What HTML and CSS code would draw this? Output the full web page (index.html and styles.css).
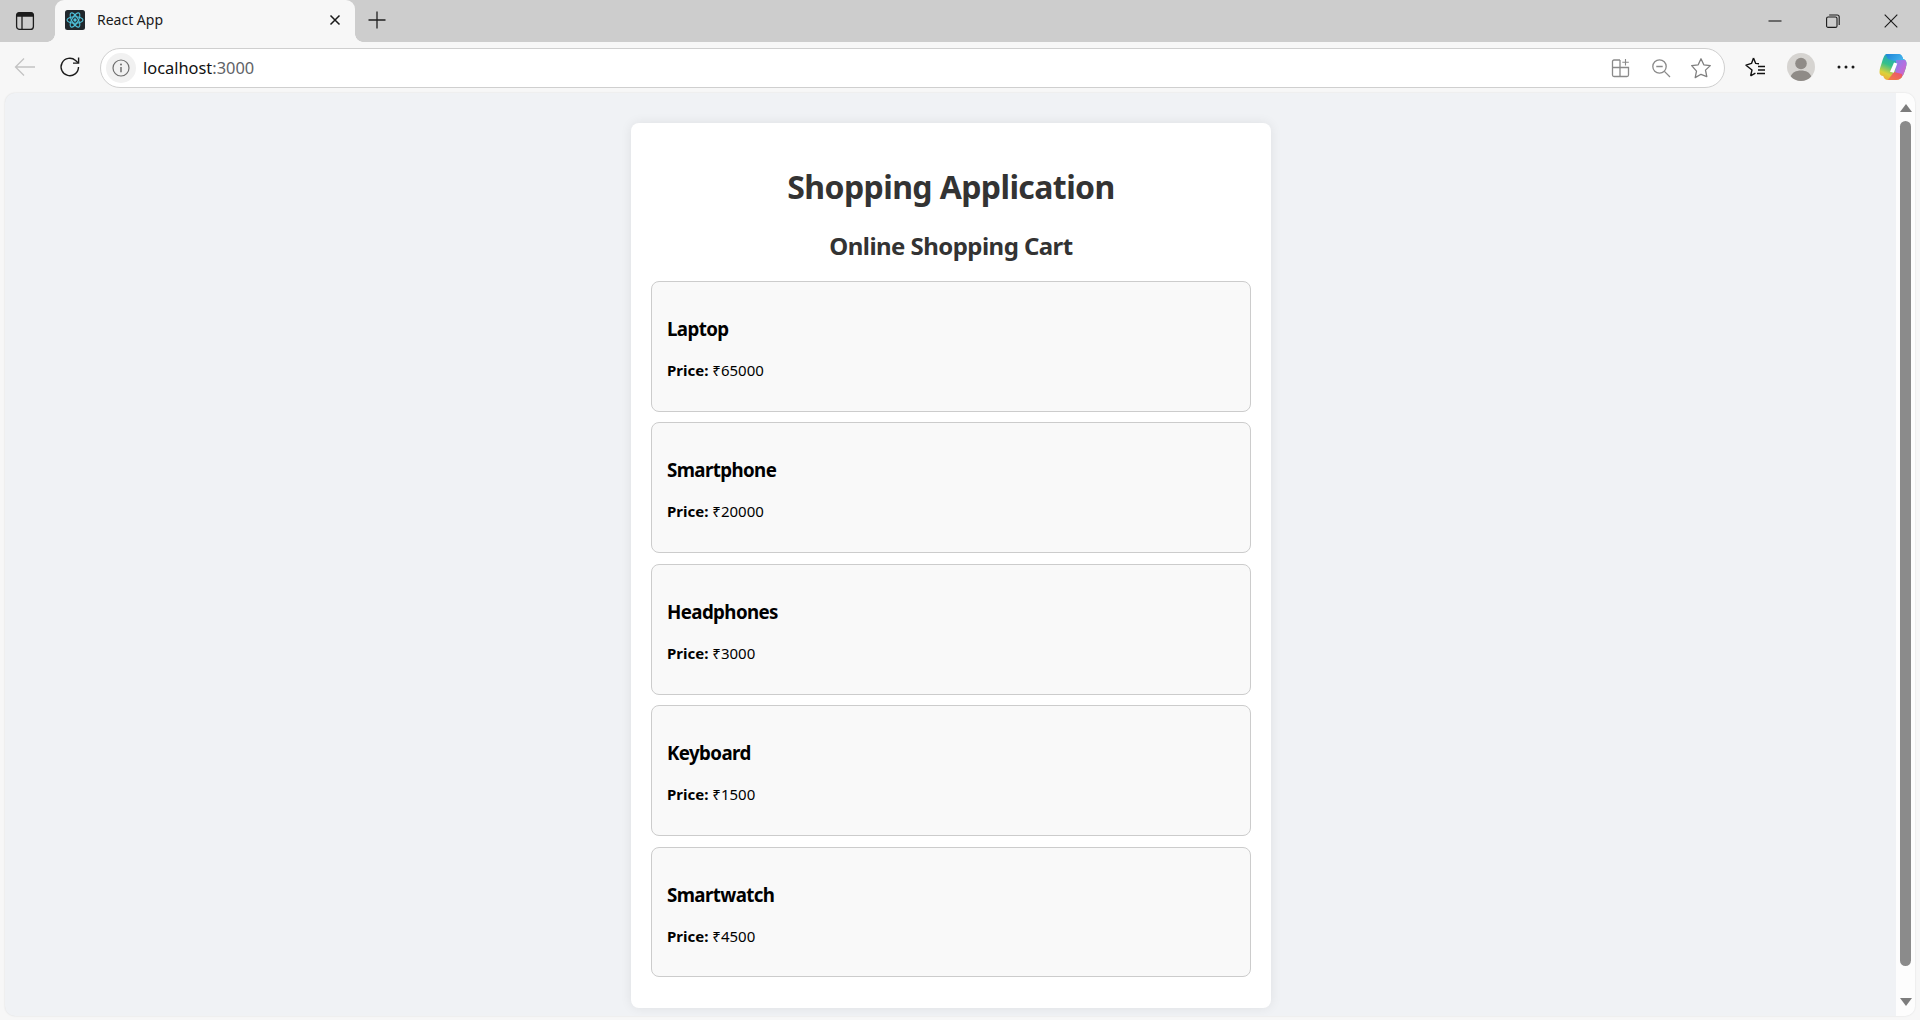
FILE: index.html
```html
<!DOCTYPE html>
<html lang="en">
<head>
<meta charset="utf-8">
<title>React App</title>
<link rel="stylesheet" href="styles.css">
</head>
<body>
<div class="browser">
  <header class="tabstrip">
    <div class="strip-btn sidebar-btn">
      <svg width="20" height="20" viewBox="0 0 20 20" fill="none" stroke="#1c1c1c" stroke-width="1.3"><rect x="1.6" y="1.6" width="16.8" height="16.8" rx="3"/><path d="M2 3.5C2 2.5 3 2 4 2h12c1 0 2 .5 2 1.5V5H2z" fill="#1c1c1c"/><path d="M7 5v13"/></svg>
    </div>
    <div class="tab">
      <svg class="favicon" width="20" height="20" viewBox="0 0 20 20"><rect width="20" height="20" rx="2.5" fill="#20272c"/><g fill="none" stroke="#4fc3dc" stroke-width="1.1"><ellipse cx="10" cy="10" rx="8" ry="3.2"/><ellipse cx="10" cy="10" rx="8" ry="3.2" transform="rotate(60 10 10)"/><ellipse cx="10" cy="10" rx="8" ry="3.2" transform="rotate(120 10 10)"/></g><circle cx="10" cy="10" r="1.7" fill="#4fc3dc"/></svg>
      <span class="tab-title">React App</span>
      <svg class="tab-close" width="12" height="12" viewBox="0 0 12 12" stroke="#1a1a1a" stroke-width="1.5"><path d="M1.5 1.5l9 9M10.5 1.5l-9 9"/></svg>
    </div>
    <div class="strip-btn new-tab">
      <svg width="18" height="18" viewBox="0 0 18 18" stroke="#1f1f1f" stroke-width="1.3"><path d="M9 .5v17M.5 9h17"/></svg>
    </div>
    <div class="window-controls">
      <div class="win-btn"><svg width="14" height="14" viewBox="0 0 14 14" stroke="#1a1a1a" stroke-width="1.1"><path d="M0.5 7h13"/></svg></div>
      <div class="win-btn"><svg width="14" height="14" viewBox="0 0 14 14" fill="none" stroke="#1a1a1a" stroke-width="1.1"><rect x="0.6" y="3" width="10.4" height="10.4" rx="1.5"/><path d="M3.2 1h8a2 2 0 0 1 2 2v8"/></svg></div>
      <div class="win-btn"><svg width="14" height="14" viewBox="0 0 14 14" stroke="#1a1a1a" stroke-width="1.1"><path d="M.7.7l12.6 12.6M13.3.7L.7 13.3"/></svg></div>
    </div>
  </header>
  <nav class="toolbar">
    <div class="tool-btn"><svg width="22" height="20" viewBox="0 0 22 20" fill="none" stroke="#c3c3c3" stroke-width="1.3"><path d="M21 10H1.5M10 1.5L1.5 10l8.5 8.5"/></svg></div>
    <div class="tool-btn"><svg width="22" height="22" viewBox="0 0 22 22" fill="none" stroke="#1c1c1c" stroke-width="1.4"><path d="M19.5 11a8.7 8.7 0 1 1-2.9-6.5L19 6.8"/><path d="M19.6 1.5v5.6H14"/></svg></div>
    <div class="address">
      <div class="site-info"><svg width="20" height="20" viewBox="0 0 20 20" fill="none" stroke="#6e6e6e" stroke-width="1.2"><circle cx="10" cy="10" r="8"/><path d="M10 9v5.2" stroke-width="1.5"/><circle cx="10" cy="6.4" r="1" fill="#6e6e6e" stroke="none"/></svg></div>
      <span class="url">localhost<span class="port">:3000</span></span>
      <div class="addr-actions">
        <div class="addr-btn"><svg width="20" height="20" viewBox="0 0 20 20" fill="none" stroke="#8a8a8a" stroke-width="1.3"><path d="M9 2H3a1.500 1.500 0 0 0-1.500 1.500V17A1.500 1.500 0 0 0 3 18.500h13a1.500 1.500 0 0 0 1.500-1.500V9.500H1.500M9 2v16.500"/><path d="M14.500 1v6.500M11.300 4.200h6.500" stroke-width="1.100"/></svg></div>
        <div class="addr-btn"><svg width="20" height="20" viewBox="0 0 20 20" fill="none" stroke="#8a8a8a" stroke-width="1.3"><circle cx="8.500" cy="8.500" r="6.700"/><path d="M13.400 13.400l5.600 5.600M5.300 8.500h6.400"/></svg></div>
        <div class="addr-btn"><svg width="22" height="22" viewBox="0 0 22 22" fill="none" stroke="#7f7f7f" stroke-width="1.3" stroke-linejoin="round"><path d="M11 1.800l2.800 6 6.500.8-4.800 4.500 1.300 6.500L11 17.300l-5.800 3.300 1.300-6.500L1.700 8.600l6.500-.8z"/></svg></div>
      </div>
    </div>
    <div class="tool-group">
      <div class="tool-btn"><svg width="22" height="22" viewBox="0 0 22 22" fill="none" stroke="#111" stroke-width="1.4" stroke-linejoin="round"><path d="M8.500 2l2.200 5.400 3.300.4M5.600 19.800L7 14 1 9.200l5.500-1.800L8.500 2M5.600 19.800l4.800-2.600"/><path d="M13 10.500h7M13 14h7M12 17.500h8"/></svg></div>
      <div class="tool-btn"><svg width="28" height="28" viewBox="0 0 28 28"><circle cx="14" cy="14" r="14" fill="#d6d4d1"/><circle cx="14" cy="10.500" r="5.800" fill="#8f8b87"/><path d="M3.800 23.500C5 19.500 9 17.500 14 17.500s9 2 10.200 6A14 14 0 0 1 14 28a14 14 0 0 1-10.200-4.500z" fill="#8f8b87"/></svg></div>
      <div class="tool-btn"><svg width="18" height="4" viewBox="0 0 18 4" fill="#1a1a1a"><circle cx="2" cy="2" r="1.500"/><circle cx="9" cy="2" r="1.500"/><circle cx="16" cy="2" r="1.500"/></svg></div>
      <div class="tool-btn copilot"><svg width="28" height="28" viewBox="0 0 28 28"><defs><clipPath id="cpBlob"><path d="M8 1H19C21.500 1 23 2.500 23.800 5L24 6C26 6.500 27.500 8 27.500 10.500C27.500 13 26.500 16 25 20C23.500 24 21.500 27 17 27H9C6.500 27 5 25.500 4.200 23C2 23 .5 21.500 .5 19C.5 16 2 12 3 9C4.500 4.500 5.500 1 8 1z"/></clipPath><linearGradient id="cpA" x1="0.6" y1="0" x2="0.2" y2="1"><stop offset="0" stop-color="#1f9ad8"/><stop offset="0.45" stop-color="#35c08a"/><stop offset="0.75" stop-color="#dcd23a"/><stop offset="1" stop-color="#f5a03a"/></linearGradient><linearGradient id="cpB" x1="0" y1="0" x2="1" y2="1"><stop offset="0" stop-color="#7a86ec"/><stop offset="0.5" stop-color="#b46fe0"/><stop offset="1" stop-color="#dd62b8"/></linearGradient><linearGradient id="cpC" x1="0" y1="1" x2="1" y2="0"><stop offset="0" stop-color="#f4843c"/><stop offset="1" stop-color="#ea4f74"/></linearGradient><linearGradient id="cpD" x1="0" y1="0" x2="1" y2="0.300"><stop offset="0" stop-color="#1a7fd6"/><stop offset="1" stop-color="#45b6ee"/></linearGradient></defs><g clip-path="url(#cpBlob)"><rect width="28" height="28" fill="url(#cpA)"/><path d="M6 0H28V7L16 8 9 6z" fill="url(#cpD)"/><path d="M17 7H28V23H16z" fill="url(#cpB)"/><path d="M8 28H23V21L15 19z" fill="url(#cpC)"/><path d="M15 9.500L18.300 10.500 14.800 19.800 11 18.800z" fill="#fff"/></g></svg></div>
    </div>
  </nav>
  <div class="viewport">
    <main class="page">
      <section class="app-card">
        <h1 class="app-title">Shopping Application</h1>
        <h2 class="cart-title">Online Shopping Cart</h2>
        <article class="item"><h3 class="item-name">Laptop</h3><p class="item-price"><strong>Price:</strong> ₹65000</p></article>
        <article class="item"><h3 class="item-name">Smartphone</h3><p class="item-price"><strong>Price:</strong> ₹20000</p></article>
        <article class="item"><h3 class="item-name">Headphones</h3><p class="item-price"><strong>Price:</strong> ₹3000</p></article>
        <article class="item"><h3 class="item-name">Keyboard</h3><p class="item-price"><strong>Price:</strong> ₹1500</p></article>
        <article class="item"><h3 class="item-name">Smartwatch</h3><p class="item-price"><strong>Price:</strong> ₹4500</p></article>
      </section>
    </main>
    <aside class="scrollbar">
      <div class="arrow arrow-up"></div>
      <div class="thumb"></div>
      <div class="arrow arrow-down"></div>
    </aside>
  </div>
</div>
</body>
</html>
```
FILE: styles.css
```css
* { box-sizing: border-box; }
html, body { margin: 0; height: 100%; overflow: hidden; }
body { font-family: "Noto Sans", "Open Sans", sans-serif; background: #f7f7f7; }

.browser { display: flex; flex-direction: column; height: 1020px; }

.tabstrip { display: flex; align-items: stretch; height: 42px; background: #cdcdcd; flex: none; }
.strip-btn { display: flex; align-items: center; justify-content: center; padding-bottom: 2px; }
.sidebar-btn { width: 55px; padding-right: 6px; padding-bottom: 1px; }
.new-tab { width: 44px; }
.tab { position: relative; display: flex; align-items: center; width: 300px; padding: 0 14px 3px 10px; background: #f7f7f7; border-radius: 9px 9px 0 0; }
.tab::before, .tab::after { content: ""; position: absolute; bottom: 0; width: 8px; height: 8px; }
.tab::before { left: -8px; background: radial-gradient(circle at 0 0, transparent 7.5px, #f7f7f7 8px); }
.tab::after { right: -8px; background: radial-gradient(circle at 100% 0, transparent 7.5px, #f7f7f7 8px); }
.favicon { flex: none; }
.tab-title { flex: 1; margin-left: 12px; font-size: 14px; color: #1a1a1a; }
.tab-close { flex: none; }
.window-controls { display: flex; margin-left: auto; }
.win-btn { display: flex; align-items: center; justify-content: center; width: 58px; }

.toolbar { display: flex; align-items: center; height: 50px; padding: 0 2px; flex: none; background: #f7f7f7; }
.tool-btn { display: flex; align-items: center; justify-content: center; width: 45px; height: 40px; flex: none; }
.tool-group { display: flex; margin-left: 8px; flex: none; }
.copilot { width: 50px; }

.address { display: flex; align-items: center; flex: 1; height: 40px; margin: 2px 0 0 8px; padding: 0 3px 0 5px; background: #fff; border: 1px solid #cfcfcf; border-radius: 20px; }
.site-info { display: flex; align-items: center; justify-content: center; width: 30px; height: 30px; border-radius: 50%; background: #f1f1f1; flex: none; }
.url { margin-left: 7px; padding-bottom: 2px; font-size: 16.400px; color: #111; }
.port { color: #5f6368; }
.addr-actions { display: flex; margin-left: auto; }
.addr-btn { display: flex; align-items: center; justify-content: center; width: 40px; height: 34px; }

.viewport { display: flex; flex: 1; min-height: 0; margin: 1px 5px 4px 5px; background: #f0f2f5; border-radius: 10px; overflow: hidden; box-shadow: 0 0 2px rgba(0,0,0,.12); }
.page { flex: 1; display: flex; justify-content: center; align-items: flex-start; padding-top: 30px; padding-left: 1px; }
.app-card { width: 640px; height: 885px; padding: 20px; background: #fff; border-radius: 8px; box-shadow: 0 0 12px rgba(0,0,0,.08); flex: none; }
.app-title { margin: 22px 0 0; font-size: 32px; line-height: 44px; font-weight: 700; letter-spacing: -.6px; text-align: center; color: #333; }
.cart-title { margin: 21px 0 0; font-size: 24px; line-height: 32px; font-weight: 700; letter-spacing: -.55px; text-align: center; color: #333; }
.item { height: 130.900px; margin-top: 10.500px; padding: 0 15px; background: #f9f9f9; border: 1px solid #ccc; border-radius: 8px; }
.cart-title + .item { margin-top: 19px; }
.item-name { margin: 0; padding-top: 34px; font-size: 18.720px; line-height: 25px; font-weight: 700; letter-spacing: -.6px; color: #000; }
.item-price { margin: 17px 0 0; font-size: 15px; line-height: 24px; color: #000; }
.item-price strong { font-weight: 700; }

.scrollbar { position: relative; display: flex; flex-direction: column; align-items: center; width: 19px; background: #fdfdfd; flex: none; }
.thumb { width: 11px; height: 845px; margin-top: 9px; background: #8b8b8b; border-radius: 6px; }
.arrow { width: 0; height: 0; border-left: 6px solid transparent; border-right: 6px solid transparent; }
.arrow-up { margin-top: 11px; border-bottom: 8px solid #7d7d7d; }
.arrow-down { margin-top: 32px; border-top: 8px solid #7d7d7d; }
```
